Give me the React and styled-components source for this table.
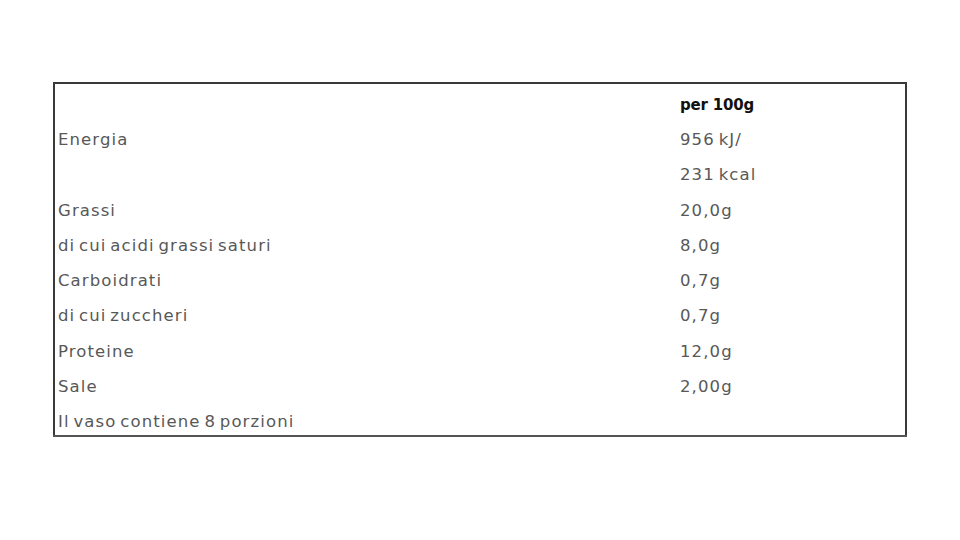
import React from "react";
import styled, { createGlobalStyle } from "styled-components";

const Global = createGlobalStyle`
  html, body {
    margin: 0;
    padding: 0;
    background: #ffffff;
  }
  body {
    font-family: "DejaVu Sans", "Open Sans", sans-serif;
  }
`;

const Page = styled.div`
  width: 960px;
  height: 540px;
  padding: 82px 0 0 53px;
  box-sizing: border-box;
`;

const Table = styled.table`
  width: 854px;
  border-collapse: collapse;
  border: 2px solid #3a3a3a;
  border-bottom-color: #555;
`;

const Row = styled.tr`
  height: 35.3px;
`;

const Cell = styled.td`
  padding: 7px 0 0 ${({ value }) => (value ? "2px" : "3px")};
  width: ${({ value }) => (value ? "auto" : "620px")};
  font-size: ${({ bold }) => (bold ? "15px" : "16.5px")};
  font-weight: ${({ bold }) => (bold ? 700 : 400)};
  color: ${({ bold }) => (bold ? "#111" : "#585858")};
  letter-spacing: ${({ bold }) => (bold ? "-0.2px" : "1.1px")};
  word-spacing: ${({ bold }) => (bold ? "0" : "-2.5px")};
  vertical-align: middle;
  white-space: nowrap;
`;

const rows = [
  ["", "per 100g", true],
  ["Energia", "956 kJ/"],
  ["", "231 kcal"],
  ["Grassi", "20,0g"],
  ["di cui acidi grassi saturi", "8,0g"],
  ["Carboidrati", "0,7g"],
  ["di cui zuccheri", "0,7g"],
  ["Proteine", "12,0g"],
  ["Sale", "2,00g"],
  ["Il vaso contiene 8 porzioni", ""],
];

export default function App() {
  return (
    <Page>
      <Global />
      <Table>
        <tbody>
          {rows.map(([label, val, bold], i) => (
            <Row key={i}>
              <Cell>{label}</Cell>
              <Cell value bold={bold}>
                {val}
              </Cell>
            </Row>
          ))}
        </tbody>
      </Table>
    </Page>
  );
}
